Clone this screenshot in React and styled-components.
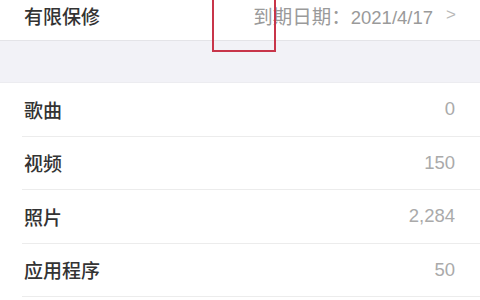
import styled, { createGlobalStyle } from "styled-components";

const GlobalStyle = createGlobalStyle`
  html, body {
    margin: 0;
    padding: 0;
    background: #fff;
  }
  body {
    font-family: "Noto Sans CJK SC", "Liberation Sans", sans-serif;
    overflow: hidden;
  }
`;

const Screen = styled.div`
  position: relative;
  width: 480px;
  height: 300px;
  overflow: hidden;
  background: #fff;
`;

const TopRow = styled.div`
  display: flex;
  align-items: center;
  justify-content: space-between;
  height: 30px;
  padding: 0 24px 10px 24px;
  border-bottom: 1px solid #e4e4e8;
`;

const Title = styled.span`
  font-size: 19px;
  color: #333;
  font-weight: 500;
`;

const Detail = styled.span`
  display: flex;
  align-items: center;
  gap: 13px;
  font-size: 19.5px;
  color: #9a9a9a;
`;

const DateText = styled.span`
  font-family: "Liberation Sans", sans-serif;
  font-size: 18.5px;
`;

const Chevron = styled.span`
  font-family: "Liberation Sans", sans-serif;
  font-size: 17px;
  color: #b8b8b8;
`;

const Gap = styled.div`
  height: 41px;
  background: #f2f2f7;
  border-bottom: 1px solid #ececf0;
`;

const List = styled.div`
  padding-left: 22px;
`;

const Row = styled.div`
  display: flex;
  align-items: center;
  justify-content: space-between;
  height: 52.5px;
  padding: 0 25px 0 2px;
  border-bottom: 1px solid #ececec;
`;

const Value = styled.span`
  font-family: "Liberation Sans", sans-serif;
  font-size: 18.5px;
  color: #aaa;
`;

const Mark = styled.div`
  position: absolute;
  left: 212px;
  top: -4px;
  width: 60px;
  height: 52px;
  border: 2px solid #c8354a;
`;

const rows = [
  ["歌曲", "0"],
  ["视频", "150"],
  ["照片", "2,284"],
  ["应用程序", "50"],
  ["容量", "64 GB"],
];

export default function App() {
  return (
    <Screen>
      <GlobalStyle />
      <TopRow>
        <Title>有限保修</Title>
        <Detail>
          <span>
            到期日期：<DateText>2021/4/17</DateText>
          </span>
          <Chevron>&gt;</Chevron>
        </Detail>
      </TopRow>
      <Gap />
      <List>
        {rows.map(([label, value]) => (
          <Row key={label}>
            <Title>{label}</Title>
            <Value>{value}</Value>
          </Row>
        ))}
      </List>
      <Mark />
    </Screen>
  );
}
